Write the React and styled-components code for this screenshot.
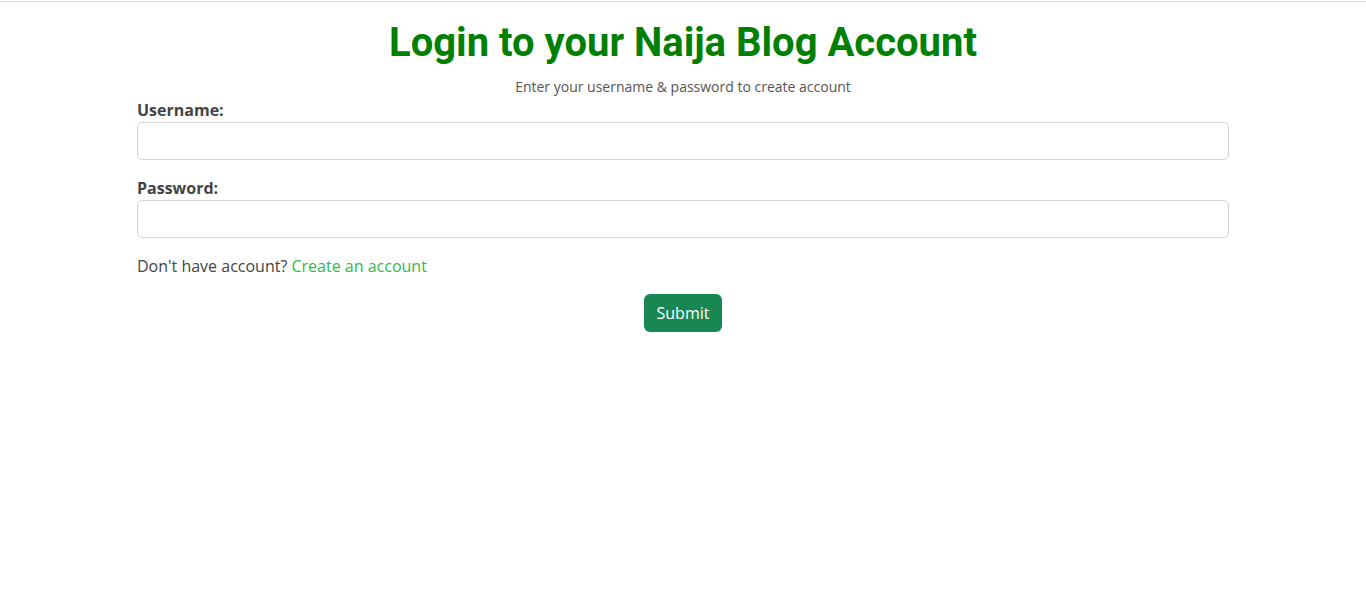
import React from 'react';
import styled, { createGlobalStyle } from 'styled-components';

const GlobalStyle = createGlobalStyle`
  body {
    margin: 0;
    padding: 0;
    font-family: "Open Sans", "Noto Sans", sans-serif;
    color: #444;
    background: #fff;
  }
  *, *::before, *::after {
    box-sizing: border-box;
  }
`;

const App = () => {
  return (
    <>
      <GlobalStyle />
      <TopRule />
      <Main>
        <Title>Login to your Naija Blog Account</Title>
        <Subtitle>Enter your username &amp; password to create account</Subtitle>
        <Form onSubmit={(e) => e.preventDefault()}>
          <Field>
            <Label htmlFor="username">Username:</Label>
            <Input id="username" type="text" />
          </Field>
          <Field>
            <Label htmlFor="password">Password:</Label>
            <Input id="password" type="password" />
          </Field>
          <Prompt>
            Don't have account? <Link href="#">Create an account</Link>
          </Prompt>
          <Actions>
            <SubmitButton type="submit">Submit</SubmitButton>
          </Actions>
        </Form>
      </Main>
    </>
  );
};

const TopRule = styled.div`
  margin-top: 1px;
  height: 1px;
  background: #dcdcdc;
`;

const Main = styled.main`
  width: 1092px;
  margin: 0 auto;
  padding-top: 17px;
`;

const Title = styled.h1`
  margin: 0 0 9px;
  font-family: Roboto, "Liberation Sans", sans-serif;
  font-weight: 700;
  font-size: 40px;
  line-height: 48px;
  color: #008000;
  text-align: center;
`;

const Subtitle = styled.p`
  margin: 0 0 1px;
  font-size: 14px;
  line-height: 21px;
  color: #555;
  text-align: center;
`;

const Form = styled.form`
  display: flex;
  flex-direction: column;
  gap: 16px;
`;

const Field = styled.div`
  display: flex;
  flex-direction: column;
`;

const Label = styled.label`
  font-size: 16px;
  line-height: 24px;
  font-weight: 700;
  color: #444;
`;

const Input = styled.input`
  height: 38px;
  width: 100%;
  border: 1px solid #d3d3d3;
  border-radius: 5px;
  padding: 6px 12px;
  font-family: inherit;
  font-size: 16px;
  outline: none;
`;

const Prompt = styled.p`
  margin: 0;
  font-size: 16px;
  line-height: 24px;
  color: #444;
`;

const Link = styled.a`
  color: #2dbb4a;
  text-decoration: none;
`;

const Actions = styled.div`
  display: flex;
  justify-content: center;
`;

const SubmitButton = styled.button`
  height: 38px;
  padding: 0 13px;
  border: none;
  border-radius: 6px;
  background: #198754;
  color: #fff;
  font-family: inherit;
  font-size: 16px;
  cursor: pointer;
`;

export default App;
